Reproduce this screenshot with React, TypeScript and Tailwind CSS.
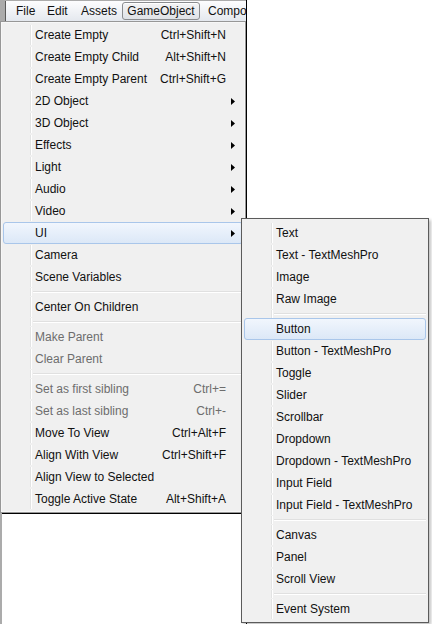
import React from 'react';

type MenuItem =
  | { sep: true }
  | { label: string; shortcut?: string; sub?: boolean; disabled?: boolean; active?: boolean };

const mainItems: MenuItem[] = [
  { label: 'Create Empty', shortcut: 'Ctrl+Shift+N' },
  { label: 'Create Empty Child', shortcut: 'Alt+Shift+N' },
  { label: 'Create Empty Parent', shortcut: 'Ctrl+Shift+G' },
  { label: '2D Object', sub: true },
  { label: '3D Object', sub: true },
  { label: 'Effects', sub: true },
  { label: 'Light', sub: true },
  { label: 'Audio', sub: true },
  { label: 'Video', sub: true },
  { label: 'UI', sub: true, active: true },
  { label: 'Camera' },
  { label: 'Scene Variables' },
  { sep: true },
  { label: 'Center On Children' },
  { sep: true },
  { label: 'Make Parent', disabled: true },
  { label: 'Clear Parent', disabled: true },
  { sep: true },
  { label: 'Set as first sibling', shortcut: 'Ctrl+=', disabled: true },
  { label: 'Set as last sibling', shortcut: 'Ctrl+-', disabled: true },
  { label: 'Move To View', shortcut: 'Ctrl+Alt+F' },
  { label: 'Align With View', shortcut: 'Ctrl+Shift+F' },
  { label: 'Align View to Selected' },
  { label: 'Toggle Active State', shortcut: 'Alt+Shift+A' },
];

const uiItems: MenuItem[] = [
  { label: 'Text' },
  { label: 'Text - TextMeshPro' },
  { label: 'Image' },
  { label: 'Raw Image' },
  { sep: true },
  { label: 'Button', active: true },
  { label: 'Button - TextMeshPro' },
  { label: 'Toggle' },
  { label: 'Slider' },
  { label: 'Scrollbar' },
  { label: 'Dropdown' },
  { label: 'Dropdown - TextMeshPro' },
  { label: 'Input Field' },
  { label: 'Input Field - TextMeshPro' },
  { sep: true },
  { label: 'Canvas' },
  { label: 'Panel' },
  { label: 'Scroll View' },
  { sep: true },
  { label: 'Event System' },
];

const Arrow = () => (
  <svg width="4" height="7" viewBox="0 0 4 7" className="ml-[5px]">
    <path d="M0 0L4 3.5L0 7Z" fill="#000" />
  </svg>
);

const MenuRows: React.FC<{ items: MenuItem[] }> = ({ items }) => (
  <>
    {items.map((item, i) => {
      if ('sep' in item) {
        return (
          <div key={i} className="flex h-[8px] items-center">
            <div className="h-full w-[28px] shrink-0 border-r border-[#e2e3e3] shadow-[1px_0_0_#ffffff]" />
            <div className="ml-[2px] h-[2px] flex-1 border-t border-b border-t-[#e0e0e0] border-b-white" />
          </div>
        );
      }
      return (
        <div
          key={i}
          className={`flex h-[22px] items-center rounded-[3px] border ${
            item.active
              ? 'border-[#a9c6ea] bg-gradient-to-b from-[#f1f6fd] to-[#dce8f7]'
              : 'border-transparent'
          }`}
        >
          <div
            className={`h-full w-[27px] shrink-0 border-r ${
              item.active ? 'border-transparent' : 'border-[#e2e3e3] shadow-[1px_0_0_#ffffff]'
            }`}
          />
          <span
            className={`min-w-0 flex-1 whitespace-nowrap pl-[4px] ${item.disabled ? 'text-[#6d6d6d]' : 'text-[#111]'}`}
          >
            {item.label}
          </span>
          {item.shortcut && (
            <span className={`shrink-0 whitespace-nowrap ${item.disabled ? 'text-[#6d6d6d]' : 'text-[#111]'}`}>
              {item.shortcut}
            </span>
          )}
          <div className="flex w-[16px] shrink-0 items-center">{item.sub && <Arrow />}</div>
        </div>
      );
    })}
  </>
);

export default function App() {
  return (
    <div className="relative h-[624px] w-[432px] overflow-hidden bg-white font-['Liberation_Sans',Arial,sans-serif] text-[12px] leading-none">
      <div className="flex h-full">
        <div className="flex w-[246px] shrink-0 flex-col bg-[#ababab]">
          <div className="ml-[5px] mt-[1px] flex h-[20px] items-center overflow-hidden border-l border-[#5a5a5a] bg-gradient-to-b from-[#fdfdfe] to-[#e4e8ee] text-[#111]">
            <span className="ml-[10px] w-[31px] shrink-0">File</span>
            <span className="w-[34px] shrink-0">Edit</span>
            <span className="w-[41px] shrink-0">Assets</span>
            <span className="flex h-[18px] w-[78px] shrink-0 items-center justify-center rounded-[3px] border border-[#8a8c8f] bg-gradient-to-b from-[#f4f4f5] to-[#dfe2e6] shadow-[inset_0_1px_0_#ffffff]">
              GameObject
            </span>
            <span className="ml-[8px] shrink-0 whitespace-nowrap">Compo</span>
          </div>
          <div className="ml-[2px] mt-[492px] flex-1 border-t border-black bg-white" />
        </div>
        <div className="flex-1 border-l border-black bg-white" />
      </div>

      <div className="absolute left-0 top-[21px] w-[246px] overflow-hidden border border-[#979797] bg-[#f0f0f0] px-[2px] py-[2px] shadow-[inset_0_0_0_1px_#f7f7f7]">
        <MenuRows items={mainItems} />
      </div>

      <div className="absolute left-[241px] top-[218px] w-[188px] overflow-hidden border border-[#5b5b5b] bg-[#f0f0f0] px-[2px] pb-[2px] pt-[3px] shadow-[2px_2px_3px_rgba(0,0,0,0.25)]">
        <MenuRows items={uiItems} />
      </div>
    </div>
  );
}
